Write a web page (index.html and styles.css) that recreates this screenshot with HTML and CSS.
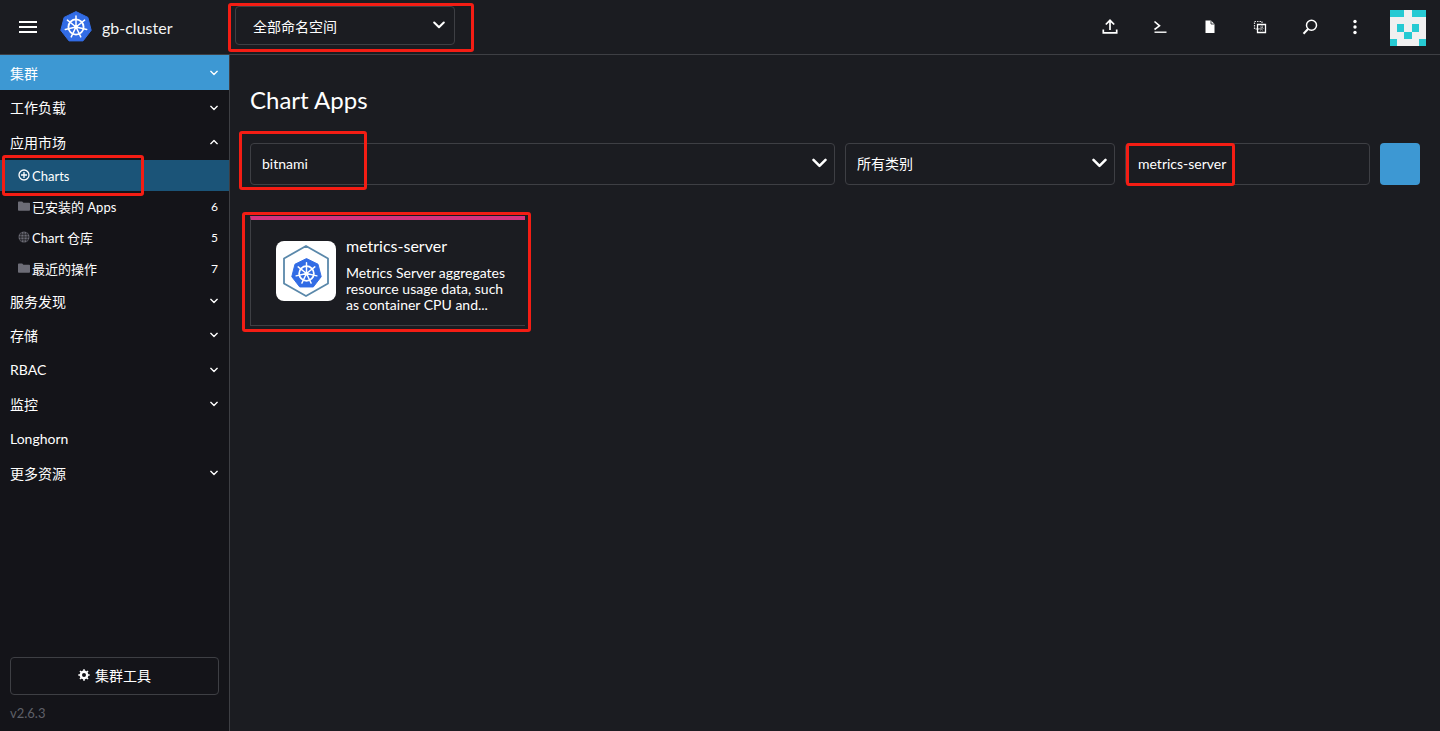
FILE: index.html
```html
<!DOCTYPE html>
<html lang="zh">
<head>
<meta charset="utf-8">
<title>Chart Apps</title>
<link rel="stylesheet" href="styles.css">
</head>
<body>
<svg class="defs" width="0" height="0">
  <symbol id="k8s" viewBox="0 0 32 32">
    <path fill="#326ce5" d="M16 .6 27.9 6.4 31.2 19.3 23 29.9 9 29.9.8 19.3 4.1 6.4z" stroke="#326ce5" stroke-width="1" stroke-linejoin="round"/>
    <g fill="none" stroke="#fff">
      <circle cx="16" cy="16" r="7.6" stroke-width="1.800"/>
      <path stroke-width="1.500" stroke-linecap="round" d="M16 16 16 5M16 16 24.600 9.150M16 16 26.700 18.450M16 16 20.770 25.900M16 16 11.230 25.900M16 16 5.300 18.450M16 16 7.400 9.150"/>
    </g>
    <circle cx="16" cy="16" r="1.900" fill="#fff"/>
  </symbol>
  <symbol id="chev" viewBox="0 0 12 8">
    <path d="M1.200 1.500 6 6.300l4.800-4.800" fill="none" stroke="currentColor" stroke-width="2" stroke-linecap="round" stroke-linejoin="round"/>
  </symbol>
  <symbol id="folder" viewBox="0 0 12 10">
    <path fill="#6c6c76" d="M0 1.200Q0 .4.800.4H4.200L5.400 1.800H11.200Q12 1.800 12 2.600V9Q12 9.800 11.200 9.800H.8Q0 9.800 0 9z"/>
  </symbol>
</svg>

<header class="topbar">
  <button class="burger" aria-label="menu"><span></span><span></span><span></span></button>
  <svg class="logo"><use href="#k8s"/></svg>
  <span class="cluster">gb-cluster</span>
  <div class="ns">
    <span>全部命名空间</span>
    <svg class="ns-chev"><use href="#chev"/></svg>
  </div>
  <div class="actions">
    <svg class="act" viewBox="0 0 16 16"><path d="M8 11V1.500M3.800 5.500 8 1.300l4.200 4.200M1.300 10.500v3.300h13.400v-3.300" fill="none" stroke="#fff" stroke-width="1.700"/></svg>
    <svg class="act" viewBox="0 0 16 16"><path d="M2.500 2.500 7.500 6.800 2.500 10.500" fill="none" stroke="#fff" stroke-width="1.600"/><path d="M2.500 13.200H14.500" stroke="#fff" stroke-width="1.400"/></svg>
    <svg class="act" viewBox="0 0 16 16"><path d="M3.500 1.500H9L12.500 5V14H3.500z" fill="#fff"/><path d="M9 1.500V5H12.500" fill="none" stroke="#1b1c21" stroke-width=".8"/></svg>
    <svg class="act" viewBox="0 0 16 16"><path d="M2.500 2.500H10V10H2.500z" fill="none" stroke="#ddd" stroke-width="1.200" stroke-dasharray="1.500 1"/><path d="M5.500 5.500H13.500V13.500H5.500z" fill="none" stroke="#fff" stroke-width="1.300"/><path d="M8 8H11V11H8z" fill="none" stroke="#aaa" stroke-width=".9" stroke-dasharray="1 1"/></svg>
    <svg class="act" viewBox="0 0 16 16"><circle cx="9.500" cy="6.300" r="5" fill="none" stroke="#fff" stroke-width="1.500"/><path d="M6 10 1.500 14.700" stroke="#fff" stroke-width="2"/></svg>
    <svg class="act act-more" viewBox="0 0 16 16"><circle cx="8" cy="2.500" r="1.700" fill="#fff"/><circle cx="8" cy="8" r="1.700" fill="#fff"/><circle cx="8" cy="13.500" r="1.700" fill="#fff"/></svg>
  </div>
  <svg class="avatar" viewBox="0 0 36 36" shape-rendering="crispEdges">
    <path fill="#f0f0f0" d="M0 0h36v36H0z"/>
    <path fill="#26cad3" d="M0 0h14.300v6.700H0zM22 0h14v6.700H22zM6.700 14h7.600v7.700H6.700zM21.700 14h7.600v7.700h-7.600zM14.300 21.700h7.400V29h-7.400zM0 29h6.700v7H0zM29.300 29H36v7h-6.700z"/>
  </svg>
</header>

<div class="body">
  <aside class="sidebar">
    <nav class="nav">
      <div class="group active"><span>集群</span><svg class="chev"><use href="#chev"/></svg></div>
      <div class="group"><span>工作负载</span><svg class="chev"><use href="#chev"/></svg></div>
      <div class="group group-open"><span>应用市场</span><svg class="chev up"><use href="#chev"/></svg></div>
      <div class="sub">
        <div class="item current">
          <svg class="ico" viewBox="0 0 12 12"><circle cx="6" cy="6" r="5" fill="none" stroke="#fff" stroke-width="1.300"/><path d="M6 3v6M3 6h6" stroke="#fff" stroke-width="1.300"/></svg>
          <span class="label">Charts</span>
        </div>
        <div class="item">
          <svg class="ico"><use href="#folder"/></svg>
          <span class="label">已安装的 Apps</span><span class="count">6</span>
        </div>
        <div class="item">
          <svg class="ico" viewBox="0 0 12 12"><circle cx="6" cy="6" r="5.500" fill="#6c6c76"/><path d="M.5 6h11M1.500 3.200h9M1.500 8.800h9M6 .5v11M3.500 1.500c-1 3-1 6 0 9M8.500 1.500c1 3 1 6 0 9" fill="none" stroke="#141419" stroke-width=".7"/></svg>
          <span class="label">Chart 仓库</span><span class="count">5</span>
        </div>
        <div class="item">
          <svg class="ico"><use href="#folder"/></svg>
          <span class="label">最近的操作</span><span class="count">7</span>
        </div>
      </div>
      <div class="group"><span>服务发现</span><svg class="chev"><use href="#chev"/></svg></div>
      <div class="group"><span>存储</span><svg class="chev"><use href="#chev"/></svg></div>
      <div class="group"><span>RBAC</span><svg class="chev"><use href="#chev"/></svg></div>
      <div class="group"><span>监控</span><svg class="chev"><use href="#chev"/></svg></div>
      <div class="group"><span>Longhorn</span></div>
      <div class="group"><span>更多资源</span><svg class="chev"><use href="#chev"/></svg></div>
    </nav>
    <div class="side-foot">
      <button class="tools">
        <svg class="cog" viewBox="0 0 12 12"><circle cx="6" cy="6" r="3.200" fill="none" stroke="#fff" stroke-width="2.400"/><path d="M6 .3v2M6 9.700v2M.3 6h2M9.700 6h2M2 2l1.400 1.400M8.600 8.600 10 10M10 2 8.600 3.400M3.400 8.600 2 10" stroke="#fff" stroke-width="1.600"/></svg>
        <span>集群工具</span>
      </button>
      <div class="version">v2.6.3</div>
    </div>
  </aside>

  <main class="main">
    <h1 class="title">Chart Apps</h1>
    <div class="filters">
      <div class="field f-repo"><span>bitnami</span><svg class="f-chev"><use href="#chev"/></svg></div>
      <div class="field f-cat"><span>所有类别</span><svg class="f-chev"><use href="#chev"/></svg></div>
      <div class="field f-search"><span>metrics-server</span></div>
      <button class="refresh" aria-label="refresh"></button>
    </div>
    <article class="card">
      <div class="card-logo">
        <svg class="hex" viewBox="0 0 46 52"><path d="M23 1 45 13.500V38.500L23 51 1 38.500V13.500z" fill="#fff" stroke="#5a88aa" stroke-width="1.800" stroke-linejoin="round"/></svg>
        <svg class="hex-k"><use href="#k8s"/></svg>
      </div>
      <div class="card-text">
        <h2 class="card-title">metrics-server</h2>
        <p class="card-desc">Metrics Server aggregates resource usage data, such as container CPU and...</p>
      </div>
    </article>
  </main>
</div>

<div class="mark m-ns"></div>
<div class="mark m-charts"></div>
<div class="mark m-repo"></div>
<div class="mark m-search"></div>
<div class="mark m-card"></div>
</body>
</html>
```
FILE: styles.css
```css
* { box-sizing: border-box; }
html, body { margin: 0; height: 100%; }
body {
  position: relative;
  height: 731px;
  overflow: hidden;
  background: #1b1c21;
  color: #fff;
  font-family: Lato, "Noto Sans CJK SC", sans-serif;
  font-size: 14px;
}
button { font: inherit; color: inherit; }
.defs { position: absolute; }

.topbar {
  height: 55px;
  display: flex;
  align-items: center;
  border-bottom: 1px solid #3e3f44;
  padding-right: 14px;
}
.burger {
  width: 18px;
  height: 12px;
  margin: 0 0 0 19px;
  padding: 0;
  background: none;
  border: 0;
  display: flex;
  flex-direction: column;
  justify-content: space-between;
}
.burger span { display: block; height: 2px; background: #fff; }
.logo { width: 32px; height: 32px; margin-left: 23px; flex: none; }
.cluster { font-size: 16px; margin-left: 10px; width: 133px; flex: none; color: #f4f4f4; }
.ns {
  width: 220px;
  height: 39px;
  flex: none;
  margin: 0 0 3px 0;
  padding: 0 9px 0 17px;
  border: 1px solid #3e3f44;
  border-radius: 4px;
  display: flex;
  align-items: center;
  justify-content: space-between;
  font-size: 14px;
}
.ns-chev { width: 12px; height: 8px; margin-top: -1px; color: #fff; }
.actions {
  margin-left: auto;
  display: flex;
  align-items: center;
  gap: 34px;
  margin-right: 27px;
}
.act { width: 16px; height: 16px; display: block; }
.act-more { margin-left: -5px; }
.avatar { width: 36px; height: 36px; display: block; margin-top: 2px; }

.body { display: flex; height: 676px; }
.sidebar {
  width: 230px;
  flex: none;
  background: #141419;
  border-right: 1px solid #3e3f44;
  display: flex;
  flex-direction: column;
}
.nav { flex: 1; }
.group {
  height: 34.400px;
  padding: 0 10px;
  display: flex;
  align-items: center;
  justify-content: space-between;
  font-size: 14px;
}
.group.active { height: 35px; background: #3d98d3; }
.group-open { height: 36px; }
.chev { width: 8px; height: 6px; color: #fff; margin-top: 1px; margin-right: 1px; }
.chev.up { transform: rotate(180deg); margin-top: -1px; }
.sub { margin-bottom: -1px; }
.item {
  height: 31px;
  padding: 0 11px 0 18px;
  display: flex;
  align-items: center;
  font-size: 13px;
}
.item.current { background: #1b5478; }
.ico { width: 12px; height: 12px; flex: none; margin: -2px 2px 0 0; }
.label { flex: 1; }
.count { font-size: 12px; }

.side-foot { padding: 0 10px 9px; }
.tools {
  width: 100%;
  height: 38px;
  background: none;
  border: 1px solid #3e3f44;
  border-radius: 4px;
  padding: 0 0 2px;
  display: flex;
  align-items: center;
  justify-content: center;
  gap: 5px;
  font-size: 14px;
}
.cog { width: 12px; height: 12px; }
.version { margin-top: 9px; font-size: 13px; line-height: 18px; color: #5f6068; }

.main { flex: 1; padding: 0 20px; }
.title {
  margin: 29px 0 0;
  font-size: 24px;
  line-height: 32px;
  font-weight: 400;
}
.filters {
  margin-top: 27px;
  display: flex;
  gap: 10px;
}
.field {
  height: 42px;
  padding: 0 11px 2px;
  border: 1px solid #3e3f44;
  border-radius: 4px;
  display: flex;
  align-items: center;
  justify-content: space-between;
  font-size: 14px;
}
.f-repo { width: 585px; }
.f-cat { width: 270px; }
.f-search { width: 245px; padding-left: 12px; }
.f-chev { width: 15px; height: 10px; margin-right: -4px; }
.refresh {
  width: 40px;
  height: 42px;
  background: #3d98d3;
  border: 0;
  border-radius: 4px;
  padding: 0;
}
.card {
  width: 275px;
  height: 110px;
  margin-top: 31px;
  border: 1px solid #3e3f44;
  border-top: 4px solid #d6337f;
  border-right: 0;
  display: flex;
  align-items: flex-start;
  padding: 21px 0 0 25px;
  gap: 10px;
}
.card-logo {
  position: relative;
  width: 60px;
  height: 60px;
  flex: none;
  background: #fff;
  border-radius: 8px;
  display: flex;
  align-items: center;
  justify-content: center;
}
.hex { width: 46px; height: 52px; display: block; }
.hex-k {
  position: absolute;
  left: 15px;
  top: 17px;
  width: 31px;
  height: 31px;
}
.card-text { width: 165px; margin-top: -5px; }
.card-title { margin: 0; font-size: 16px; font-weight: 400; line-height: 20px; }
.card-desc { margin: 9px 0 0; font-size: 14px; line-height: 16px; }

.mark {
  position: absolute;
  border: 3px solid #f41d14;
  border-radius: 3px;
  pointer-events: none;
}
.m-ns { left: 228px; top: 3px; width: 246px; height: 49px; }
.m-charts { left: 2px; top: 155px; width: 142px; height: 41px; }
.m-repo { left: 239px; top: 131px; width: 128px; height: 59px; }
.m-search { left: 1126px; top: 143px; width: 109px; height: 43px; }
.m-card { left: 242px; top: 212px; width: 289px; height: 120px; }
```
